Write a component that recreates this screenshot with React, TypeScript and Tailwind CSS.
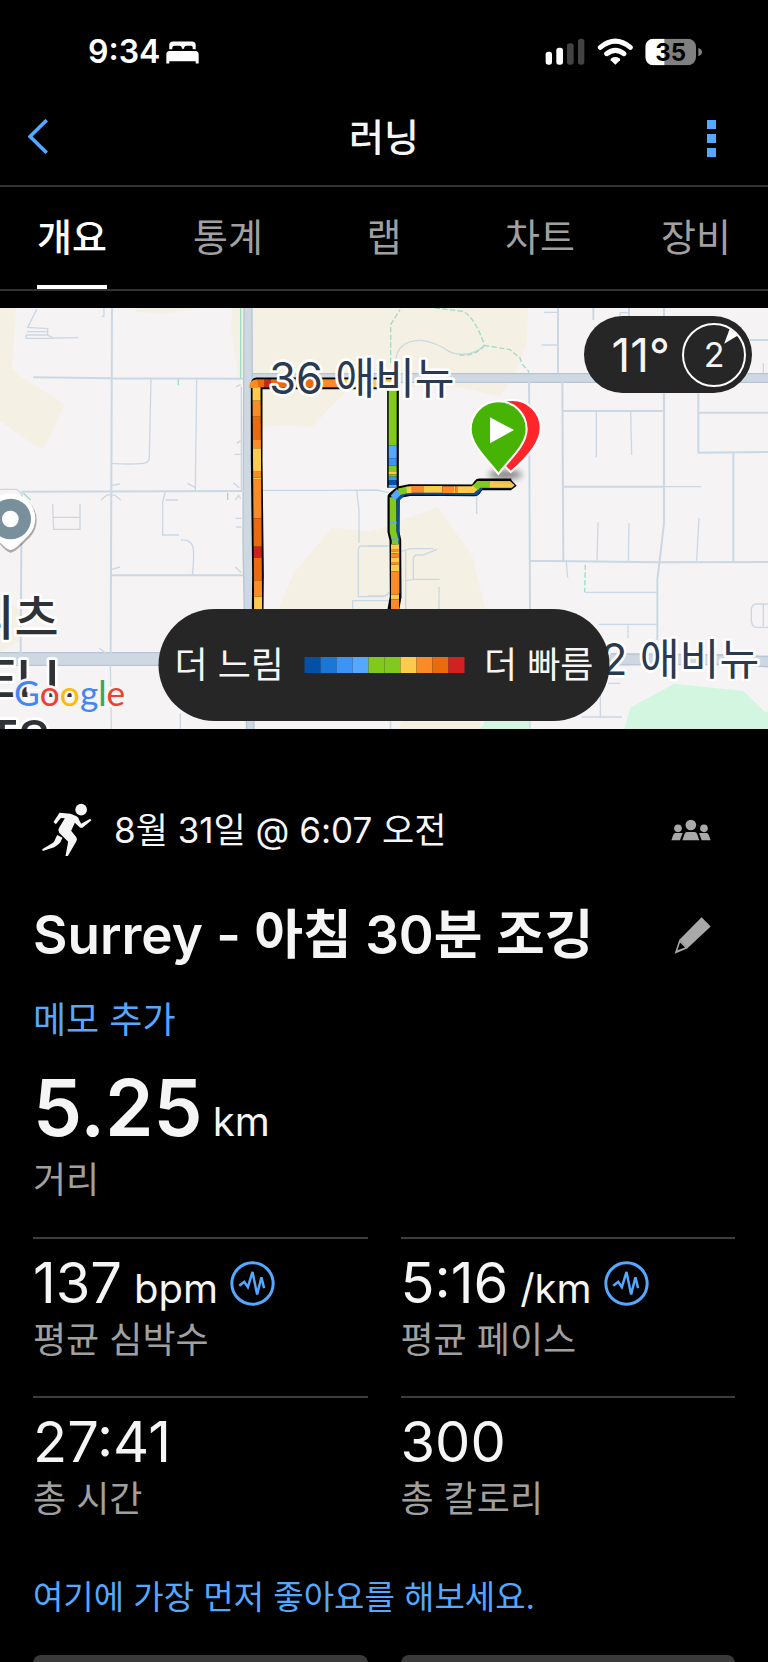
import React from "react";
import clsx from "clsx";

const tabs = ["개요", "통계", "랩", "차트", "장비"];

const paceColors = [
  "bg-[#0450a4]",
  "bg-[#1b77d4]",
  "bg-[#3c94f5]",
  "bg-[#54a8ff]",
  "bg-[#82c91e]",
  "bg-[#82c91e]",
  "bg-[#fccb4b]",
  "bg-[#fb8b26]",
  "bg-[#ec6a0e]",
  "bg-[#d32020]",
];

const GREEN = "#82c91e";
const YELLOW = "#fccb4b";
const ORANGE = "#fb8b26";
const DEEP = "#ec6a0e";
const RED = "#d32020";
const SKY = "#54a8ff";
const BLUE = "#3c94f5";
const NAVY = "#0450a4";

// [from, to, colour] along the long axis of each street
type Segment = [number, number, string];

const westSegments: Segment[] = [
  [78, 122, YELLOW],
  [122, 170, ORANGE],
  [170, 240, DEEP],
  [240, 265, ORANGE],
  [265, 335, YELLOW],
  [335, 353, ORANGE],
  [353, 359, YELLOW],
  [359, 475, ORANGE],
  [475, 560, DEEP],
  [560, 594, RED],
  [594, 661, DEEP],
  [661, 710, ORANGE],
  [710, 760, YELLOW],
];

const northSegments: Segment[] = [
  [84, 104, DEEP],
  [104, 122, RED],
  [122, 170, DEEP],
  [170, 220, ORANGE],
  [220, 262, DEEP],
  [262, 340, ORANGE],
  [340, 422, YELLOW],
  [422, 432, GREEN],
  [432, 486, YELLOW],
];

const eastSegments: Segment[] = [
  [80, 257, GREEN],
  [257, 296, SKY],
  [296, 317, BLUE],
  [317, 336, GREEN],
  [336, 343, YELLOW],
  [343, 350, GREEN],
  [350, 360, BLUE],
  [360, 375, NAVY],
  [375, 383, SKY],
];

const southSegments: Segment[] = [
  [553, 567, YELLOW],
  [567, 574, ORANGE],
  [574, 580, YELLOW],
  [580, 593, ORANGE],
  [593, 606, YELLOW],
  [606, 614, ORANGE],
  [614, 634, YELLOW],
  [634, 704, ORANGE],
  [704, 718, YELLOW],
  [718, 760, ORANGE],
];

const BedIcon = () => (
  <svg viewBox="437 63 100 69" className="h-[23px] w-[33px]" fill="#fff">
    <path d="M447 88V75q0-11 11-11h58q11 0 11 11v13h-9v-6q0-5-5-5h-14q-6 0-7 6v3h-7v-3q-1-6-7-6h-15q-7 0-7 7v4z" />
    <path d="M438 131V104q0-11 10-11h78q10 0 10 11v27h-9v-7h-80v7z" />
  </svg>
);

const StatusIcons = () => (
  <svg viewBox="72 52 474 84" className="h-7 w-[158px]" fill="#fff">
    <rect x="74" y="93" width="19" height="39" rx="8" />
    <rect x="106" y="81" width="20" height="51" rx="8" />
    <rect x="138" y="68" width="20" height="64" rx="8" fill="#434343" />
    <rect x="171" y="54" width="19" height="78" rx="8" fill="#434343" />
    <g fill="none" stroke="#fff" strokeWidth="15" strokeLinecap="round">
      <path d="M238 80q45-37 90 0" />
      <path d="M257 99q26-20 52 0" />
    </g>
    <path d="M283 132l-14-13q-2-3 2-6 12-8 24 0 4 3 2 6z" />
    <clipPath id="battery">
      <rect x="373" y="54" width="152" height="80" rx="25" />
    </clipPath>
    <g clipPath="url(#battery)">
      <rect x="373" y="54" width="152" height="80" fill="#808080" />
      <rect x="373" y="54" width="57" height="80" />
    </g>
    <path d="M532 82q11 3 11 12t-11 12z" fill="#808080" />
    <text x="449" y="120" fontSize="72" fontWeight="700" textAnchor="middle" fill="#000">
      35
    </text>
  </svg>
);

const RunnerIcon = () => (
  <svg viewBox="62 38 152 162" className="h-[54px] w-[51px]" fill="#f5f5f5">
    <circle cx="182" cy="58" r="17.500" />
    <path d="M99 95l18-28 33 3 18 8q7 4 8 11l6 11 27-15 4 5-27 22h-7l-16-15-11 24 15 19q4 6 1 12l-26 45h-7l8-43-27-27q-5-6-1-13l18-30-12-1-15 19z" />
    <path d="M110 134l16 8-6 13q-3 5-9 9l-10 7-34 11-2-5 30-18q5-3 7-8z" />
  </svg>
);

const GroupIcon = () => (
  <svg viewBox="60 58 120 66" className="h-[22px] w-10" fill="#a9a9a9">
    <circle cx="119.500" cy="76" r="16" />
    <circle cx="81" cy="86" r="11.500" />
    <circle cx="159" cy="86" r="11.500" />
    <path d="M94 122l7-20q2-5 7-5h23q5 0 7 5l7 20z" />
    <path d="M61 122l6-17q2-5 6-5h22l-8 22z" />
    <path d="M179 122l-6-17q-2-5-6-5h-23l8 22z" />
  </svg>
);

const PencilIcon = () => (
  <svg viewBox="66 350 110 110" className="size-[37px]" fill="#a9a9a9">
    <path d="M148 351l27 27-69 65-24-25z" />
    <path fillRule="evenodd" d="M68 459l14-42 25 26zM76 449l23-8-15-15z" />
  </svg>
);

const PulseIcon = () => (
  <svg viewBox="637 89 136 136" className="size-[45px]" fill="none" stroke="#54a8ff">
    <circle cx="705" cy="157" r="62.500" strokeWidth="9" />
    <path d="M665 164l15-12 11 16 14-46 14 68 13-52 8 33" strokeWidth="7.500" />
  </svg>
);

const Route = () => (
  <g transform="translate(690 156)" fill="none">
    <g stroke="#000" strokeWidth="35" strokeLinejoin="round">
      <path d="M83 760L84 640 80 300V70H489V383" />
      <path d="M844 373H748L735 391 540 390 510 396 490 412V515L496 540 497 710 488 760" />
      <path d="M840 356L860 377 844 390z" stroke="none" fill="#000" />
    </g>
    <g stroke={NAVY} strokeWidth="10">
      <path d="M844 380H756L740 400 560 399H524L505 418 504 520 506 700" />
    </g>
    <g strokeWidth="24">
      {westSegments.map(([from, to, color]) => (
        <path
          key={from}
          d={`M${79 + from / 140} ${from}L${79 + to / 140} ${to}`}
          stroke={color}
        />
      ))}
      {northSegments.map(([from, to, color]) => (
        <path key={from} d={`M${from} 70H${to}`} stroke={color} />
      ))}
      {eastSegments.map(([from, to, color]) => (
        <path key={from} d={`M488 ${from}V${to}`} stroke={color} />
      ))}
      {southSegments.map(([from, to, color]) => (
        <path key={from} d={`M495 ${from}V${to}`} stroke={color} />
      ))}
      <path d="M70 84V78Q70 71 84 70" stroke={ORANGE} />
    </g>
    <g strokeWidth="20">
      <path d="M489 412V515L495 540V553" stroke={GREEN} />
      <path d="M480 488h20M486 538h20" stroke={SKY} strokeWidth="5" />
      <path d="M489 414L508 394" stroke={SKY} />
      <path d="M506 395L534 389" stroke={GREEN} />
      <path d="M530 390L546 388" stroke={YELLOW} />
      <path d="M544 388H582" stroke={ORANGE} />
      <path d="M582 388H637" stroke={YELLOW} />
      <path d="M637 389H670M676 389H684" stroke={ORANGE} />
      <path d="M670 389H676M684 389H728L742 378" stroke={YELLOW} />
      <path d="M736 384L746 373H778" stroke={GREEN} />
      <path d="M778 363H840L854 376 846 383H778z" fill={YELLOW} />
    </g>
  </g>
);

const MapCanvas = () => (
  <svg viewBox="0 0 2304 1263" className="block h-auto w-full bg-[#f5f3f4]" role="img" aria-label="지도">
    {/* Land, west half */}
    <g transform="translate(0 -24)" fill="#f5f0e4">
      <path d="M0 24H48L36 205 60 228 193 313 136 440 116 444 0 363z" />
      <path d="M405 24H600L490 43 412 36z" />
      <path d="M698 24H730V235H716L693 85z" />
      <path d="M757 24H1584L1580 130 1544 225 1500 290 1380 262 1050 262 935 382 870 376 786 380V235H757z" />
      <path d="M0 895L60 930 62 1020 0 1058z" />
      <path d="M836 927L880 822 996 682 1110 695 1165 676 1312 622 1416 765 1456 927z" />
      <path d="M1190 1290l30-40 190-10 50 50z" />
    </g>
    <g transform="translate(1104 -24)" fill="#d3f6e1">
      <path d="M768 1290L787 1223 918 1151 1126 1173 1189 1235H1200V1290z" />
      <path d="M338 1290L350 1262H486V1290z" />
    </g>

    {/* Main roads */}
    <g fill="#cdd8e3" stroke="#b8c4d2" strokeWidth="4">
      <path d="M-10 1034H1500L2190 1041 2314 1046V1077L2190 1069 1500 1072H-10z" />
      <path d="M755 197H2314V223H755z" />
      <path d="M732-10H756L758 600 762 1280H740L729 700z" />
    </g>

    {/* Side streets, west half */}
    <g transform="translate(0 -24)" fill="none" stroke="#cbd8e4" strokeWidth="6">
      <path d="M336 24L332 1060M100 232L336 235 730 236M64 575L735 573M333 826H730M65 580L62 1060" />
      <g strokeWidth="4">
        <path d="M110 28L83 82 143 86V105L160 114 235 113M80 95H142M78 105H142M78 105V115H160M312 24V48L305 50" />
        <path d="M453 236L448 470Q448 488 430 490 390 494 336 490M590 236L586 573M724 260V570" />
        <path d="M496 573L488 606V705H537M496 600H534M543 720Q570 718 578 738 584 758 577 826" />
        <path d="M158 612L161 688H240V612M161 652H240M303 600L322 584 345 586 362 600M336 556L360 552M336 808L360 801" />
        <path d="M562 550L585 562M700 548L718 564M722 254L708 260M710 430L722 422M704 463H724M706 655H724M708 681H724M706 600L716 586 722 596M706 801L724 818" />
        <path d="M786 571H1000L1130 570 1165 578M1070 571L1077 630V728M1165 738H1085Q1075 738 1075 750V890H1150L1168 880M1058 926V902H1168" />
        <path d="M0 568H50L64 580M298 1045L318 1060M331 1095L334 1290M541 1240V1290M1171 1250V1290" />
      </g>
    </g>

    {/* Side streets, east half */}
    <g transform="translate(1104 -24)" fill="none" stroke="#cbd8e4" strokeWidth="6">
      <path d="M570 24V218M676 24V60M783 24V60M888 24V218M483 245L486 927M583 245L586 782M586 333H888M888 280V670L868 840V1020M991 280V458L1200 456M991 338H1200M1096 458V786M486 782L870 787 1200 786M588 560H888M1146 120H1200" />
      <g strokeWidth="4">
        <path d="M527 37H570M521 135H570M756 60V38H783M685 336V472M788 336L791 465M690 667L687 782M783 670L781 782M993 654L986 782M888 560H1000M595 786L599 833M650 877H868M692 973H868M780 973V1015M1186 190V218" />
        <path d="M82 200Q80 120 160 121 200 124 250 158 310 175 350 135M326 586V642" />
        <path d="M0 738H60M100 754L127 746H196M207 748L165 765H145Q136 768 136 780V838M113 754V927M113 842L140 838H215M213 860V927M0 888H50Q62 886 62 876" />
        <path d="M1205 912H1165Q1150 914 1150 930V962Q1152 982 1165 982H1205M1186 912V978M697 1150V1250M720 1150H757M640 1251H762M68 1262V1290M486 1262V1290" />
      </g>
    </g>

    {/* Footpaths */}
    <g fill="none" stroke="#9fdcc4" strokeWidth="4">
      <path d="M722 0V210M535 214V232M683 554V576M70 556L92 576" />
      <path
        strokeDasharray="16 7"
        d="M1172 165V50L1200 5M1304 0L1390 10Q1425 30 1454 112L1530 125 1560 150 1566 168 1586 190V194M1454 112Q1425 148 1370 140M1756 770L1754 852"
      />
    </g>

    <Route />

    {/* Finish and start pins */}
    <filter id="pinShadow" x="-50%" y="-150%" width="200%" height="400%">
      <feGaussianBlur stdDeviation="9" />
    </filter>
    <ellipse cx="1516" cy="500" rx="50" ry="14" fill="#000" opacity="0.45" filter="url(#pinShadow)" />
    <g transform="translate(1104 -24)" stroke="#fff" strokeWidth="6">
      <path d="M428 516L414 502Q350 430 350 384A84 84 0 0 1 518 384Q518 440 428 516z" fill="#ff262b" />
      <path d="M391 522C360 480 308 436 308 388A83 83 0 0 1 476 388C476 436 422 480 391 522z" fill="#47b304" />
      <path d="M366 352L438 390 366 430z" fill="#fff" stroke="none" />
    </g>

    {/* Place marker at the west edge */}
    <g transform="translate(0 -24)">
      <path d="M31 758C12 753-5 722-22 712A76 76 0 1 1 90 712C70 729 50 756 31 758z" fill="#000" opacity="0.3" />
      <path d="M31 750C12 745-5 718-22 708A75 75 0 1 1 84 708C65 725 50 748 31 750z" fill="#fff" />
      <circle cx="32" cy="657" r="61" fill="#78909c" />
      <circle cx="31" cy="657" r="25" fill="#fff" />
    </g>

    {/* Labels */}
    <g
      stroke="#fff"
      strokeWidth="16"
      strokeLinejoin="round"
      paintOrder="stroke"
      fill="#2a3a50"
    >
      <text x="808" y="259" fontSize="130">
        36 애비뉴
      </text>
      <text x="2278" y="1100" fontSize="130" textAnchor="end">
        32 애비뉴
      </text>
      <g fill="#2f3337" fontWeight="500">
        <text x="176" y="982" textAnchor="end" fontSize="144">
          리츠
        </text>
        <text x="222" y="1168" textAnchor="end" fontSize="152">
          ELL
        </text>
        <text x="150" y="1344" textAnchor="end" fontSize="148">
          TS
        </text>
      </g>
      <text x="42" y="1194" fontSize="106" stroke="#f5f3f4" fontFamily="Lato, sans-serif">
        <tspan fill="#4285f4">G</tspan>
        <tspan fill="#ea4335">o</tspan>
        <tspan fill="#fbbc04">o</tspan>
        <tspan fill="#4285f4">g</tspan>
        <tspan fill="#34a853">l</tspan>
        <tspan fill="#ea4335">e</tspan>
      </text>
    </g>
  </svg>
);

const WeatherBadge = () => (
  <div className="absolute top-2 right-4 flex h-[77px] items-center gap-3 rounded-full bg-[#262626] pr-1.5 pl-7 text-[#f5f5f5]">
    <span className="text-[46px] leading-none">11°</span>
    <span className="relative flex size-16 items-center justify-center rounded-full border-2 border-white text-[34px] leading-none">
      2
      <svg viewBox="0 0 40 44" className="absolute top-1 right-1.5 h-[15px] w-[14px]" fill="#fff">
        <path d="M16 0L40 19 0 43z" />
      </svg>
    </span>
  </div>
);

const PaceLegend = () => (
  <div className="absolute bottom-2 left-1/2 flex h-28 -translate-x-1/2 items-center gap-5 rounded-full bg-[#262626] px-4 text-4xl leading-none whitespace-nowrap text-[#f5f5f5]">
    <span>더 느림</span>
    <div className="flex">
      {paceColors.map((color, i) => (
        <span key={i} className={clsx("size-4", color)} />
      ))}
    </div>
    <span>더 빠름</span>
  </div>
);

interface StatProps {
  value: string;
  unit?: string;
  label: string;
  zones?: boolean;
}

const Stat: React.FC<StatProps> = ({ value, unit, label, zones }) => (
  <div className="h-[159px] border-t-2 border-[#3d3d3d] pt-4">
    <div className="flex h-14 items-center gap-3">
      <p className="flex items-baseline gap-3 leading-none">
        <span className="text-[56px]">{value}</span>
        {unit && <span className="text-[40px]">{unit}</span>}
      </p>
      {zones && (
        <button aria-label={`${label} 차트`}>
          <PulseIcon />
        </button>
      )}
    </div>
    <p className="mt-1 text-4xl leading-[50px] text-[#a0a0a0]">{label}</p>
  </div>
);

export default function App() {
  return (
    <div className="flex h-screen flex-col overflow-hidden bg-black font-[Inter,'Noto_Sans_CJK_KR',sans-serif] text-[#f5f5f5]">
      {/* Status bar */}
      <div className="flex h-[88px] shrink-0 items-center justify-between pt-4 pr-[65px] pl-[88px]">
        <div className="flex items-center gap-1.5 text-white">
          <span className="text-[32px] leading-none font-semibold">9:34</span>
          <BedIcon />
        </div>
        <StatusIcons />
      </div>

      <header className="flex h-[99px] shrink-0 items-center justify-between border-b-2 border-[#333] px-7">
        <button aria-label="뒤로" className="w-10">
          <svg viewBox="27 299 60 104" className="h-[35px] w-5" fill="none" stroke="#54a8ff" strokeWidth="11">
            <path d="M83 302L33 351l50 49" />
          </svg>
        </button>
        <h1 className="text-[38px] leading-none font-medium">러닝</h1>
        <button aria-label="더 보기" className="flex w-10 flex-col items-end gap-[5px] pt-1 pr-6">
          <span className="size-[9px] bg-[#54a8ff]" />
          <span className="size-[9px] bg-[#54a8ff]" />
          <span className="size-[9px] bg-[#54a8ff]" />
        </button>
      </header>

      <nav className="shrink-0 border-b-2 border-[#333]">
        <div className="-mx-1.5 grid h-[102px] grid-cols-5 justify-items-center">
          {tabs.map((tab, i) => (
            <button
              key={tab}
              className={clsx(
                "border-b-4 pt-0.5 text-[38px] leading-none",
                i === 0 ? "border-white font-medium text-white" : "border-transparent text-[#a0a0a0]"
              )}
            >
              {tab}
            </button>
          ))}
        </div>
      </nav>

      <section className="relative mt-[17px] shrink-0">
        <MapCanvas />
        <WeatherBadge />
        <PaceLegend />
      </section>

      <main className="shrink-0 px-[33px] pt-[72px]">
        <div className="flex h-[58px] items-center justify-between pr-6 pl-2">
          <div className="flex items-center gap-[22px]">
            <RunnerIcon />
            <span className="text-[35px] leading-none">8월 31일 @ 6:07 오전</span>
          </div>
          <button aria-label="공개 범위">
            <GroupIcon />
          </button>
        </div>

        <div className="mt-11 flex h-16 items-center justify-between pr-6">
          <h2 className="text-[53px] leading-none font-semibold">Surrey - 아침 30분 조깅</h2>
          <button aria-label="이름 편집">
            <PencilIcon />
          </button>
        </div>

        <a href="#memo" className="mt-7 block text-4xl leading-[50px] text-[#54a8ff]">
          메모 추가
        </a>

        <div className="mt-6">
          <p className="flex h-20 items-baseline gap-2.5 leading-none">
            <span className="text-[78px] font-semibold">5.25</span>
            <span className="text-[40px]">km</span>
          </p>
          <p className="mt-1.5 text-4xl leading-[50px] text-[#a0a0a0]">거리</p>
        </div>

        <div className="mt-8 grid grid-cols-2 gap-x-[33px]">
          <Stat value="137" unit="bpm" label="평균 심박수" zones />
          <Stat value="5:16" unit="/km" label="평균 페이스" zones />
          <Stat value="27:41" label="총 시간" />
          <Stat value="300" label="총 칼로리" />
        </div>

        <a href="#like" className="mt-5 block text-[33px] leading-[44px] text-[#54a8ff]">
          여기에 가장 먼저 좋아요를 해보세요.
        </a>

        <div className="mt-9 grid grid-cols-2 gap-x-[33px]">
          <button aria-label="좋아요" className="h-20 rounded-lg bg-[#3a3a3a]" />
          <button aria-label="댓글" className="h-20 rounded-lg bg-[#3a3a3a]" />
        </div>
      </main>
    </div>
  );
}
